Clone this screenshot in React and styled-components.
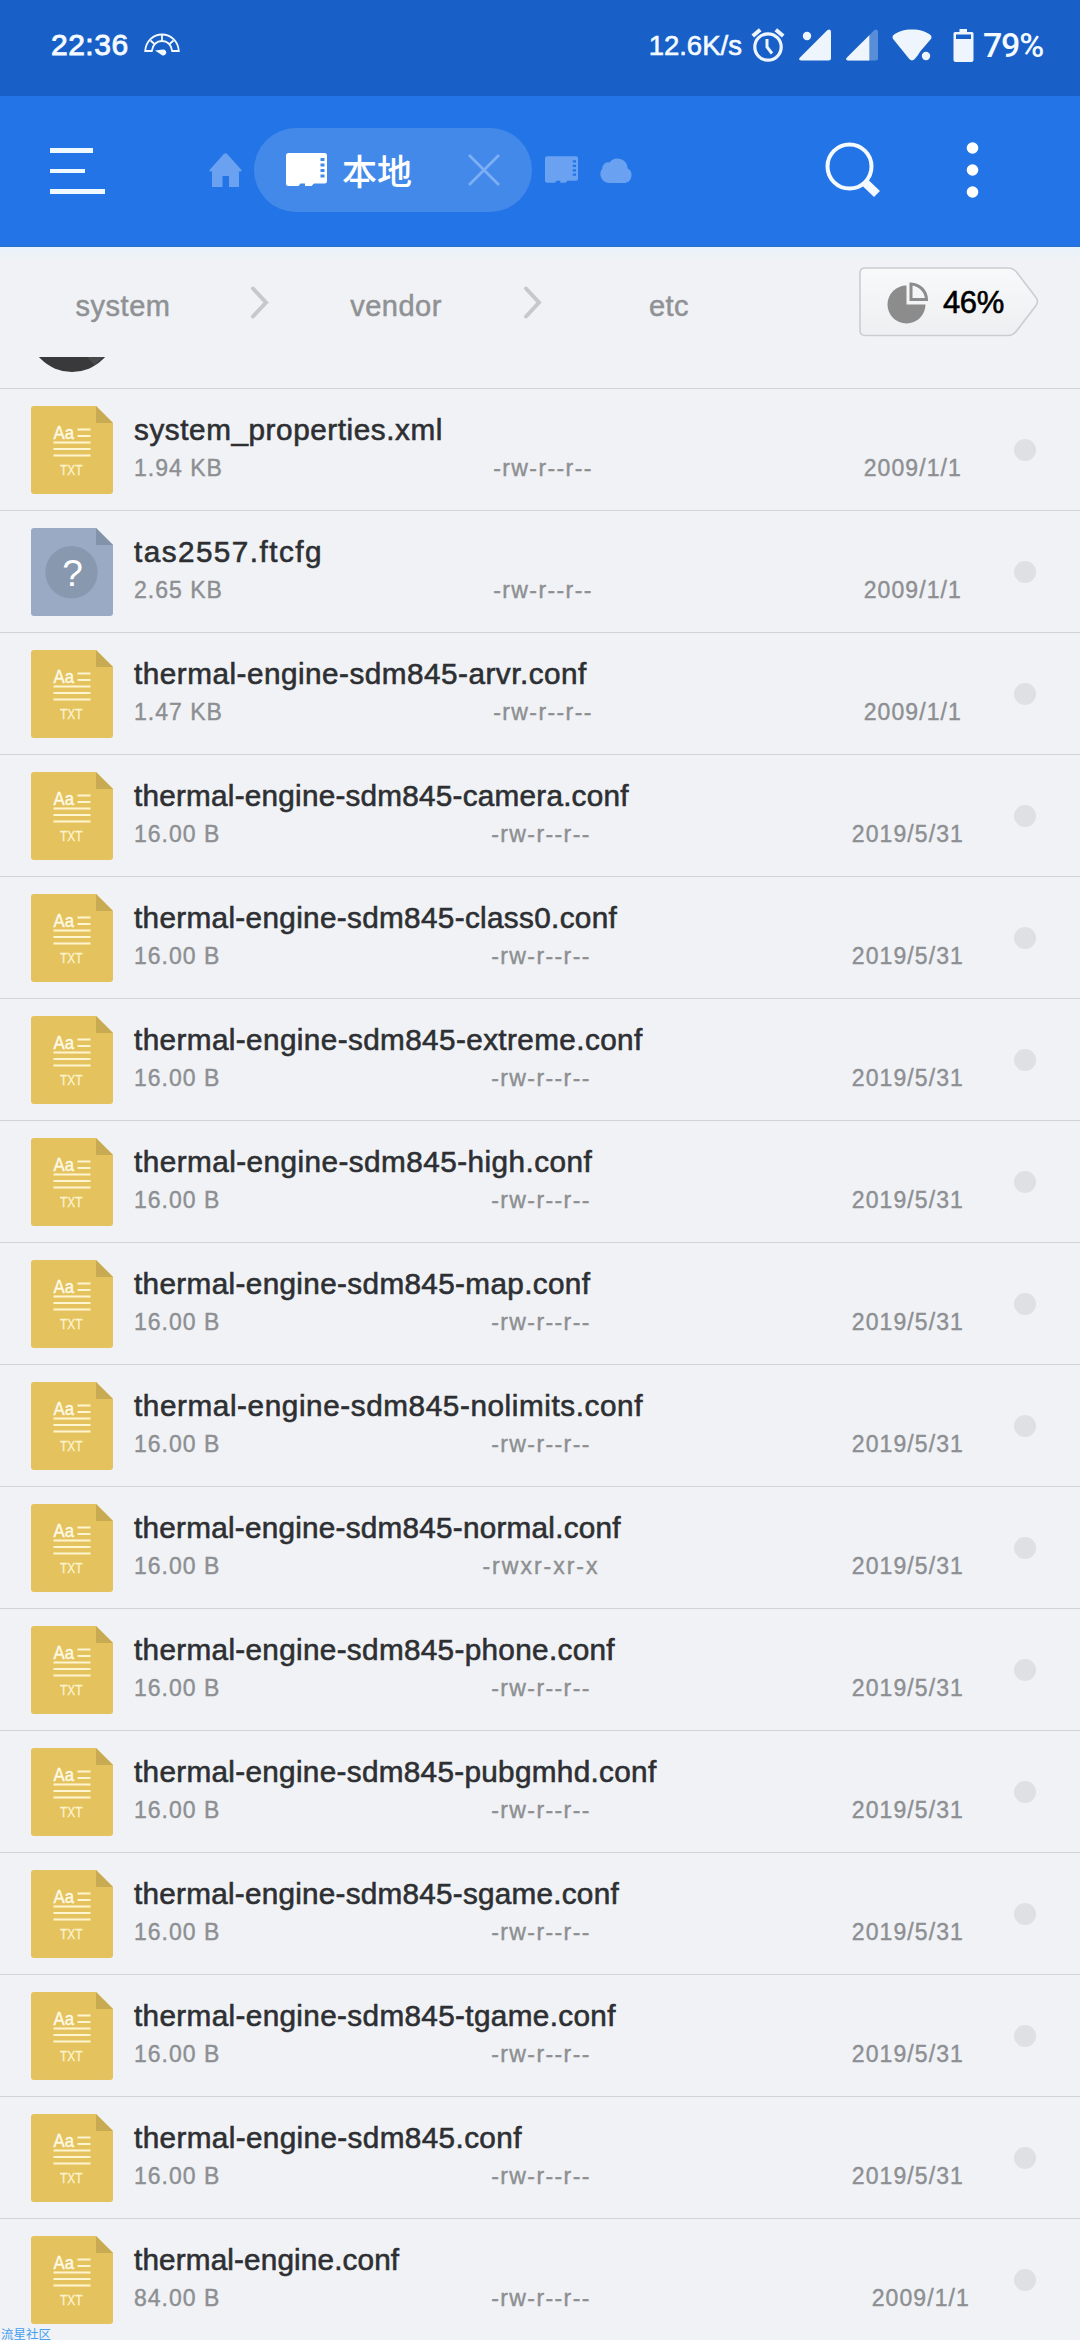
import React, { memo } from "react";
import styled, { createGlobalStyle } from "styled-components";

const GlobalStyle = createGlobalStyle`
  * {
    box-sizing: border-box;
  }

  body {
    margin: 0;
    background: #f0f2f5;
    font-family: "Liberation Sans", "Noto Sans CJK SC", sans-serif;
  }

  svg {
    display: block;
    flex: none;
  }
`;

const Screen = styled.div`
  position: relative;
  display: flex;
  flex-direction: column;
  width: 1080px;
  height: 2340px;
  overflow: hidden;
  background: #f0f2f5;
`;

const StatusBar = styled.header`
  display: flex;
  align-items: center;
  justify-content: space-between;
  height: 96px;
  padding: 0 37px 6px 51px;
  background: #1860c7;
  color: #f4faff;
`;

const StatusGroup = styled.div`
  display: flex;
  align-items: center;
  gap: ${p => p.$gap || 0}px;
  margin-left: ${p => p.$offset || 0}px;
`;

const Clock = styled.span`
  font-size: 30px;
  line-height: 36px;
  letter-spacing: 0.5px;
  -webkit-text-stroke: 0.9px #f4faff;
`;

const Speed = styled.span`
  font-size: 27.5px;
  line-height: 36px;
  padding-top: 2px;
  -webkit-text-stroke: 0.6px #f4faff;
`;

const BatteryLevel = styled.span`
  font-family: Roboto, sans-serif;
  font-size: 34px;
  font-weight: 500;
  line-height: 36px;
  letter-spacing: -1.2px;
`;

const Toolbar = styled.nav`
  display: flex;
  align-items: center;
  height: 151px;
  padding: 0 101px 3px 50px;
  background: #2374e7;
  border-bottom: 1px solid #2b6fc9;
`;

const MenuButton = styled.div`
  display: flex;
  flex-direction: column;
  gap: 16px;
  width: 159px;
  padding-top: 3px;
`;

const MenuLine = styled.span`
  width: ${p => p.$width}px;
  height: 4.6px;
  background: #f0f9ff;
`;

const Tabs = styled.div`
  display: flex;
  align-items: center;
`;

const ActiveTab = styled.div`
  display: flex;
  align-items: center;
  width: 278px;
  height: 84px;
  margin: 0 13px 0 12px;
  padding: 0 32px;
  border-radius: 42px;
  background: #4389e9;
`;

const TabLabel = styled.span`
  flex: 1;
  margin-left: 15px;
  color: #fff;
  font-family: "Noto Sans CJK SC", sans-serif;
  font-size: 35px;
  font-weight: 500;
  line-height: 48px;
`;

const TabGap = styled.span`
  width: 22px;
`;

const Actions = styled.div`
  display: flex;
  align-items: center;
  justify-content: space-between;
  width: 154px;
  margin-left: auto;
`;

const PathBar = styled.div`
  display: flex;
  height: 110px;
  background: linear-gradient(#e9f3fa, #f0f2f5 14px);
`;

const Crumb = styled.span`
  width: 246px;
  padding-top: 37px;
  text-align: center;
  color: #8f9194;
  font-size: 29px;
  line-height: 44px;
  letter-spacing: 0.5px;
  -webkit-text-stroke: 0.5px #8f9194;
`;

const Separator = styled.svg`
  width: 27px;
  height: 40px;
  margin-top: 35px;
`;

const Usage = styled.div`
  display: flex;
  align-items: center;
  width: 180px;
  height: 70px;
  margin: 20px 0 0 67px;
  position: relative;
`;

const UsageShape = styled.svg`
  position: absolute;
  inset: 0;
`;

const UsageIcon = styled.svg`
  margin-left: 28px;
  position: relative;
`;

const UsageValue = styled.span`
  position: relative;
  margin-left: 14px;
  padding-top: 2px;
  color: #000;
  font-size: 31px;
  line-height: 36px;
  letter-spacing: -0.4px;
  -webkit-text-stroke: 0.6px #000;
`;

const FileList = styled.main`
  display: flex;
  flex-direction: column;
`;

const ClippedRow = styled.div`
  height: 31px;
  padding-left: 28px;
  overflow: hidden;
`;

const Row = styled.div`
  display: flex;
  height: 122px;
  flex: none;
  padding: 17px 44px 0 31px;
  border-top: 1px solid #d1d3d6;
`;

const Details = styled.div`
  width: 836px;
  margin-left: 21px;
  padding-top: 4px;
`;

const Name = styled.div`
  color: #2d2f32;
  font-size: 29.7px;
  line-height: 40px;
  letter-spacing: ${p => p.$tracking}px;
  white-space: nowrap;
  -webkit-text-stroke: 0.6px #2d2f32;
`;

const Meta = styled.div`
  display: flex;
  align-items: center;
  margin-top: 3px;
  color: #8d8f92;
  font-size: 23px;
  line-height: 30px;
  -webkit-text-stroke: 0.4px #8d8f92;
`;

const Size = styled.span`
  width: 325px;
  letter-spacing: 1px;
`;

const Mode = styled.span`
  width: 164px;
  text-align: center;
  letter-spacing: ${p => (p.$wide ? 2 : 1.4)}px;
  padding-left: ${p => (p.$shifted ? 4 : 0)}px;
`;

const DateText = styled.span`
  margin-left: auto;
  padding-right: ${p => p.$inset}px;
  letter-spacing: 1.1px;
`;

const Mark = styled.span`
  width: 22px;
  height: 22px;
  margin: 33px 0 0 auto;
  border-radius: 50%;
  background: #dfe0e2;
`;

const Watermark = styled.span`
  position: absolute;
  left: 1px;
  bottom: 0;
  color: #45a0ef;
  font-family: "Noto Sans CJK SC", sans-serif;
  font-size: 12.5px;
  line-height: 13px;
`;

const SMALL = { mode: "-rw-r--r--", size: "16.00 B", date: "2019/5/31", inset: 6 };

const files = [
  { name: "system_properties.xml", size: "1.94 KB", mode: "-rw-r--r--", date: "2009/1/1", inset: 8, shifted: true, tracking: 0.57 },
  { name: "tas2557.ftcfg", size: "2.65 KB", mode: "-rw-r--r--", date: "2009/1/1", inset: 8, shifted: true, tracking: 1.45, unknown: true },
  { name: "thermal-engine-sdm845-arvr.conf", size: "1.47 KB", mode: "-rw-r--r--", date: "2009/1/1", inset: 8, shifted: true, tracking: 0.5 },
  { ...SMALL, name: "thermal-engine-sdm845-camera.conf", tracking: 0.24 },
  { ...SMALL, name: "thermal-engine-sdm845-class0.conf", tracking: 0.34 },
  { ...SMALL, name: "thermal-engine-sdm845-extreme.conf", tracking: 0.4 },
  { ...SMALL, name: "thermal-engine-sdm845-high.conf", tracking: 0.46 },
  { ...SMALL, name: "thermal-engine-sdm845-map.conf", tracking: 0.36 },
  { ...SMALL, name: "thermal-engine-sdm845-nolimits.conf", tracking: 0.59 },
  { ...SMALL, name: "thermal-engine-sdm845-normal.conf", tracking: 0.25, mode: "-rwxr-xr-x", wide: true },
  { ...SMALL, name: "thermal-engine-sdm845-phone.conf", tracking: 0.33 },
  { ...SMALL, name: "thermal-engine-sdm845-pubgmhd.conf", tracking: 0.32 },
  { ...SMALL, name: "thermal-engine-sdm845-sgame.conf", tracking: 0.25 },
  { ...SMALL, name: "thermal-engine-sdm845-tgame.conf", tracking: 0.36 },
  { ...SMALL, name: "thermal-engine-sdm845.conf", tracking: 0.38 },
  { name: "thermal-engine.conf", size: "84.00 B", mode: "-rw-r--r--", date: "2009/1/1", inset: 0, tracking: 0.15 }
];

const GaugeIcon = () => (
  <svg width="36" height="24" viewBox="0 0 36 24" fill="none" stroke="#f4faff" strokeWidth="1.8">
    <path d="M1.2 18C1.8 8.500 9 1.500 18 1.500S34.200 8.500 34.800 18H28.200C27.600 12 23.500 8 18 8S8.400 12 7.800 18Z" />
    <path d="M18 1.500V8M6.500 7.500L11 11.500M29.500 7.500L25 11.500" />
    <path d="M11 17.500L19 16.500A3 3 0 1 1 17 21.500Z" fill="#f4faff" stroke="none" />
  </svg>
);

const AlarmIcon = () => (
  <svg width="34" height="34" viewBox="0 0 34 34" fill="none" stroke="#eef5fc">
    <circle cx="17" cy="19" r="13.200" strokeWidth="3.200" />
    <path d="M1.800 8L9.200 1.700M32.200 8L24.800 1.700" strokeWidth="4" />
    <path d="M16 11V19L21 25.500" strokeWidth="3" />
  </svg>
);

const SignalIcon = ({ dotted }) => (
  <svg width="32" height="32" viewBox="0 0 32 32" fill="#eef5fc">
    {dotted ? (
      <>
        <path d="M28.500 1Q32 -0.800 32 3V29Q32 31.500 29.500 31.500H2Q-1.200 31 1 28.500Z" />
        <circle cx="8" cy="7" r="4.200" />
      </>
    ) : (
      <>
        <path d="M28.500 1Q32 -0.800 32 3V29Q32 31.500 29.500 31.500H2Q-1.200 31 1 28.500Z" opacity="0.3" />
        <path d="M23.300 6.200V31.500H2Q-1.200 31 1 28.500Z" />
      </>
    )}
  </svg>
);

const WifiIcon = () => (
  <svg width="40" height="32" viewBox="0 0 40 32" fill="#eef5fc">
    <path d="M20 0.500C28 0.500 34 2.500 38.500 6Q40.500 8 38.500 10.500L29 21.500Q27 24 26 26L22.500 30.300Q20 32.500 17.500 30.300L1.500 10.500Q-0.500 8 1.500 6C6 2.500 12 0.500 20 0.500Z" />
    <circle cx="34" cy="27" r="4.200" />
  </svg>
);

const BatteryIcon = () => (
  <svg width="21" height="33" viewBox="0 0 21 33">
    <path
      d="M6.500 0H14V3H19Q20.500 3 20.500 4.500V31Q20.500 33 18.500 33H2.500Q0.500 33 0.500 31V4.500Q0.500 3 2 3H6.500ZM3 5.500V10H18V5.500Z"
      fill="#eef5fc"
      fillRule="evenodd"
    />
  </svg>
);

const HomeIcon = () => (
  <svg width="33" height="34" viewBox="0 0 33 34">
    <path d="M14.800 1Q16.500 -0.500 18.200 1L32.500 17Q33 18.500 31 18.500H30V34H20V23H13.500V34H3V18.500H2Q0 18.500 0.500 17Z" fill="#6aa1f0" />
  </svg>
);

const CardIcon = ({ width, height, color, slot }) => (
  <svg width={width} height={height} viewBox="0 0 41 33">
    <path
      d="M2.500 0H38.500Q41 0 41 2.500V28Q41 30.500 38.500 30.500H28L25.500 33H19V30.500H14.500L12.500 33H2.500Q0 33 0 30.500V2.500Q0 0 2.500 0Z"
      fill={color}
    />
    <path d="M34.500 6.500H38.500M34.500 12H38.500M34.500 17.500H38.500M34.500 23H38.500" stroke={slot} strokeWidth="2.800" />
  </svg>
);

const CloseIcon = () => (
  <svg width="32" height="32" viewBox="0 0 32 32">
    <path d="M1 1L31 31M31 1L1 31" stroke="#7caff3" strokeWidth="2.800" />
  </svg>
);

const CloudIcon = () => (
  <svg width="33" height="27" viewBox="0 0 33 27">
    <path
      d="M9 27A9 9 0 0 1 2.300 12.500A6 6 0 0 1 9.500 6.500A10 9.500 0 0 1 27 9Q27.500 11 27.500 12.200A8 8 0 0 1 25 27Z"
      fill="#6aa1f0"
    />
  </svg>
);

const SearchIcon = () => (
  <svg width="56" height="56" viewBox="0 0 56 56" fill="none" stroke="#f4faff">
    <circle cx="24.500" cy="24.500" r="22" strokeWidth="4" />
    <path d="M40.500 41L52 52" strokeWidth="8.500" />
  </svg>
);

const MoreIcon = () => (
  <svg width="13" height="56" viewBox="0 0 13 56" fill="#fff">
    <circle cx="6.500" cy="6" r="5.800" />
    <circle cx="6.500" cy="28" r="5.800" />
    <circle cx="6.500" cy="50" r="5.800" />
  </svg>
);

const Chevron = () => (
  <Separator viewBox="0 0 27 40">
    <path d="M7 6.500L20 20.500L7 34.500" fill="none" stroke="#c6c8cb" strokeWidth="4" strokeLinecap="round" />
  </Separator>
);

// Sheet with a folded corner, shared by both file kinds
const FileIcon = ({ unknown }) => (
  <svg width="82" height="88" viewBox="0 0 82 88">
    <path
      d="M3 0H65L82 17V85Q82 88 79 88H3Q0 88 0 85V3Q0 0 3 0Z"
      fill={unknown ? "#9baac4" : "#e4c25e"}
    />
    <path d="M65 0L82 17H65Z" fill={unknown ? "#8192a9" : "#c8aa52"} />
    {unknown ? (
      <>
        <circle cx="40.500" cy="44.300" r="26.200" fill="#8798af" />
        <text x="41.500" y="58" textAnchor="middle" fontSize="37" fill="#fff">
          ?
        </text>
      </>
    ) : (
      <>
        <text
          x="22.500"
          y="33"
          fontSize="18.500"
          fill="#fffbe6"
          stroke="#fffbe6"
          strokeWidth="0.400"
          textLength="20.500"
          lengthAdjust="spacingAndGlyphs"
        >
          Aa
        </text>
        <path d="M46.500 23.500H59.500M46.500 30H59.500M22.500 36.500H59.500M22.500 43H59.500M22.500 49.500H59.500" stroke="#fff6d0" strokeWidth="2.200" />
        <text
          x="29"
          y="69"
          fontSize="14.500"
          fill="#fdf3cc"
          stroke="#fdf3cc"
          strokeWidth="0.300"
          textLength="22.500"
          lengthAdjust="spacingAndGlyphs"
        >
          TXT
        </text>
      </>
    )}
  </svg>
);

const FileRow = ({ file }) => (
  <Row>
    <FileIcon unknown={file.unknown} />
    <Details>
      <Name $tracking={file.tracking}>{file.name}</Name>
      <Meta>
        <Size>{file.size}</Size>
        <Mode $shifted={file.shifted} $wide={file.wide}>
          {file.mode}
        </Mode>
        <DateText $inset={file.inset}>{file.date}</DateText>
      </Meta>
    </Details>
    <Mark />
  </Row>
);

const App = () => (
  <Screen>
    <GlobalStyle />
    <StatusBar>
      <StatusGroup $gap={15}>
        <Clock>22:36</Clock>
        <GaugeIcon />
      </StatusGroup>
      <StatusGroup $gap={14.5}>
        <StatusGroup $gap={9}>
          <Speed>12.6K/s</Speed>
          <AlarmIcon />
        </StatusGroup>
        <SignalIcon dotted />
        <SignalIcon />
        <WifiIcon />
        <StatusGroup $gap={9} $offset={6}>
          <BatteryIcon />
          <BatteryLevel>79%</BatteryLevel>
        </StatusGroup>
      </StatusGroup>
    </StatusBar>

    <Toolbar>
      <MenuButton>
        <MenuLine $width={43} />
        <MenuLine $width={35} />
        <MenuLine $width={55} />
      </MenuButton>
      <Tabs>
        <HomeIcon />
        <ActiveTab>
          <CardIcon width={41} height={33} color="#fff" slot="#4389e9" />
          <TabLabel>本地</TabLabel>
          <CloseIcon />
        </ActiveTab>
        <CardIcon width={33} height={27} color="#6aa1f0" slot="#2374e7" />
        <TabGap />
        <CloudIcon />
      </Tabs>
      <Actions>
        <SearchIcon />
        <MoreIcon />
      </Actions>
    </Toolbar>

    <PathBar>
      <Crumb>system</Crumb>
      <Chevron />
      <Crumb>vendor</Crumb>
      <Chevron />
      <Crumb>etc</Crumb>
      <Usage>
        <UsageShape width="180" height="70" viewBox="0 0 180 70">
          <defs>
            <linearGradient id="tag" x1="0" y1="0" x2="0" y2="1">
              <stop offset="0" stopColor="#f8f9fa" />
              <stop offset="1" stopColor="#eeeff1" />
            </linearGradient>
          </defs>
          <path
            d="M6 1H149Q154 1 157.500 5L177 30.500Q180 34.500 177 38.500L157.500 64Q154 68.500 149 68.500H6Q1 68.500 1 63.500V6Q1 1 6 1Z"
            fill="url(#tag)"
            stroke="#cccdd0"
            strokeWidth="1.600"
          />
        </UsageShape>
        <UsageIcon width="42" height="43" viewBox="0 0 42 43">
          <path d="M19.500 4.500A19 19 0 1 0 38.500 23.500H19.500Z" fill="#8c8c8c" />
          <path d="M24 3V18.500H39.500A16 16 0 0 0 24 3Z" fill="#f4f5f6" stroke="#8c8c8c" strokeWidth="3" />
        </UsageIcon>
        <UsageValue>46%</UsageValue>
      </Usage>
    </PathBar>

    <FileList>
      <ClippedRow>
        <svg width="88" height="15" viewBox="0 73 88 15">
          <circle cx="44" cy="44" r="44" fill="#39393b" />
          <path d="M59 73H75L66.500 81Z" fill="#4a4a4c" />
        </svg>
      </ClippedRow>
      {files.map(file => (
        <FileRow key={file.name} file={file} />
      ))}
    </FileList>
    <Watermark>流星社区</Watermark>
  </Screen>
);

export default memo(App);
